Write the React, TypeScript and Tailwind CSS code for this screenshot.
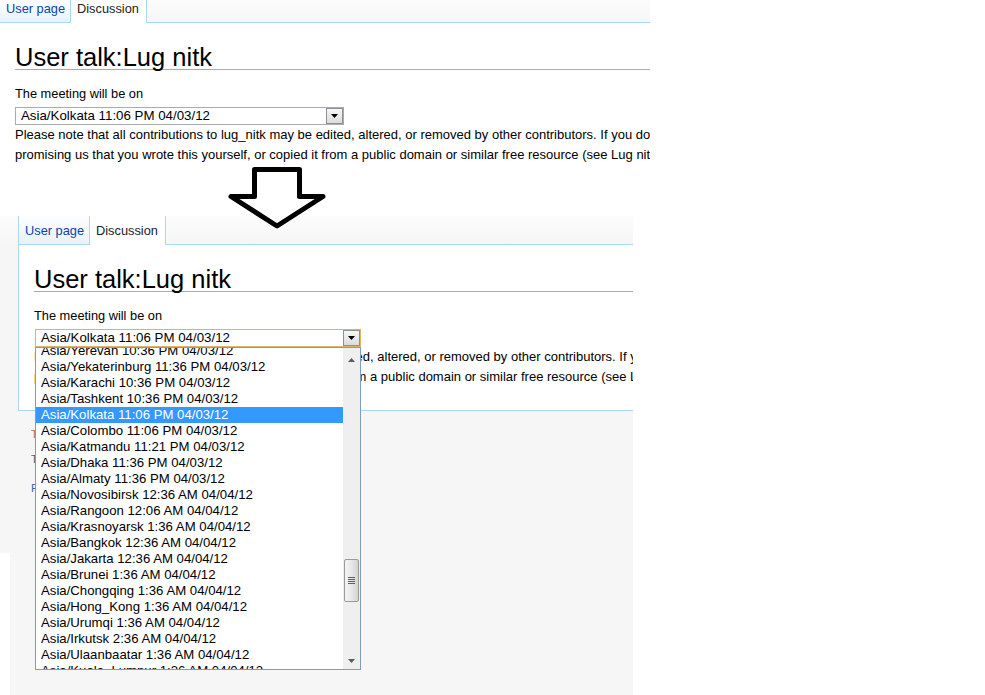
import React from 'react'

const font = "font-['Liberation_Sans',Arial,sans-serif]"

const zones: string[] = [
  'Asia/Yerevan 10:36 PM 04/03/12',
  'Asia/Yekaterinburg 11:36 PM 04/03/12',
  'Asia/Karachi 10:36 PM 04/03/12',
  'Asia/Tashkent 10:36 PM 04/03/12',
  'Asia/Kolkata 11:06 PM 04/03/12',
  'Asia/Colombo 11:06 PM 04/03/12',
  'Asia/Katmandu 11:21 PM 04/03/12',
  'Asia/Dhaka 11:36 PM 04/03/12',
  'Asia/Almaty 11:36 PM 04/03/12',
  'Asia/Novosibirsk 12:36 AM 04/04/12',
  'Asia/Rangoon 12:06 AM 04/04/12',
  'Asia/Krasnoyarsk 1:36 AM 04/04/12',
  'Asia/Bangkok 12:36 AM 04/04/12',
  'Asia/Jakarta 12:36 AM 04/04/12',
  'Asia/Brunei 1:36 AM 04/04/12',
  'Asia/Chongqing 1:36 AM 04/04/12',
  'Asia/Hong_Kong 1:36 AM 04/04/12',
  'Asia/Urumqi 1:36 AM 04/04/12',
  'Asia/Irkutsk 2:36 AM 04/04/12',
  'Asia/Ulaanbaatar 1:36 AM 04/04/12',
  'Asia/Kuala_Lumpur 1:36 AM 04/04/12',
]

const Tabs = ({ lower }: { lower?: boolean }) => (
  <div className={`flex ${lower ? 'h-[29px]' : 'h-[23px]'} text-[12.8px] leading-[19.2px]`}>
    <div
      className={`flex items-end pl-[6px] pb-[4px] border-b border-r border-[#a7d7f9] bg-gradient-to-b from-[#fdfeff] to-[#e9f2f9] text-[#0645ad] ${
        lower ? 'w-[72px] border-l' : 'w-[71px]'
      }`}
    >
      User page
    </div>
    <div className="flex items-end pl-[6px] pb-[5px] w-[76px] border-r border-[#a7d7f9] bg-white text-[#222]">
      Discussion
    </div>
    <div className="flex-1 border-b border-[#a7d7f9] bg-gradient-to-b from-[#fcfcfc] to-[#f6f6f6]" />
  </div>
)

const Tri = ({ up, color }: { up?: boolean; color: string }) => (
  <svg width="7" height="4" viewBox="0 0 7 4">
    <path d={up ? 'M0 4h7L3.5 0z' : 'M0 0h7L3.5 4z'} fill={color} />
  </svg>
)

const DropList = () => (
  <div className="absolute left-[-1px] top-[17px] z-10 w-[326px] h-[323px] border border-[#7f9db9] bg-white flex overflow-hidden">
    <div className="flex-1 min-w-0 overflow-hidden">
      <div className="mt-[-5px]">
        {zones.map((z) => (
          <div
            key={z}
            className={`h-[16px] leading-[16px] pl-[5px] text-[13.2px] whitespace-nowrap ${
              z.startsWith('Asia/Kolkata') ? 'bg-[#3399ff] text-white' : 'text-black'
            }`}
          >
            {z}
          </div>
        ))}
      </div>
    </div>
    <div className="w-[17px] bg-[#efefef] flex flex-col">
      <div className="h-[17px] flex items-end justify-center pb-[3px]">
        <Tri up color="#5b5b5b" />
      </div>
      <div className="h-[194px]" />
      <div className="mx-[1px] h-[43px] rounded-[2px] border border-[#9a9a9a] bg-gradient-to-r from-[#f4f4f4] via-[#e8e8e8] to-[#d3d3d3] flex flex-col items-center justify-center gap-[1px]">
        <div className="h-px w-[7px] bg-[#5e5e5e]" />
        <div className="h-px w-[7px] bg-[#5e5e5e]" />
        <div className="h-px w-[7px] bg-[#5e5e5e]" />
        <div className="h-px w-[7px] bg-[#5e5e5e]" />
      </div>
      <div className="flex-1" />
      <div className="h-[17px] flex items-center justify-center">
        <Tri color="#5b5b5b" />
      </div>
    </div>
  </div>
)

const Select = ({ focused, w }: { focused?: boolean; w: string }) => (
  <div
    className={`relative ${w} h-[18px] border bg-white flex items-center ${
      focused ? 'border-[#dbb46a]' : 'border-[#a5acb5]'
    }`}
  >
    <span className="flex-1 pl-[5px] text-[13.3px] leading-[16px] text-black whitespace-nowrap">
      Asia/Kolkata 11:06 PM 04/03/12
    </span>
    <div className="h-full w-[17px] border border-[#8e8f8f] bg-gradient-to-b from-[#f7f7f7] to-[#dcdcdc] flex items-center justify-center">
      <Tri color="#000" />
    </div>
    {focused && <DropList />}
  </div>
)

const Content = ({ focused }: { focused?: boolean }) => (
  <div className="pl-[15px] pt-[23px] text-black">
    <h1 className="text-[25.5px] leading-[23px] font-normal border-b border-[#aaaaaa] whitespace-nowrap">
      User talk:Lug nitk
    </h1>
    <div className="mt-[14px] text-[12.8px] leading-[19.2px]">The meeting will be on</div>
    <div className={`mt-[4px] ${focused ? 'ml-[1px]' : ''}`}>
      <Select focused={focused} w={focused ? 'w-[326px]' : 'w-[329px]'} />
    </div>
    <div className="overflow-hidden whitespace-nowrap text-[13px] leading-[20px]">
      <div>
        Please note that all contributions to lug_nitk may be edited, altered, or removed by other
        contributors. If you do not want your writing to be edited mercilessly, then do not submit it here.
        You are also
      </div>
      <div>
        promising us that you wrote this yourself, or copied it from a public domain or similar free resource
        (see Lug nitk:Copyrights for details). Do not submit copyrighted work without permission!
      </div>
    </div>
  </div>
)

export default function App() {
  return (
    <div className={`relative w-[985px] h-[695px] bg-white overflow-hidden ${font}`}>
      {/* before */}
      <div className="w-[650px] h-[170px] overflow-hidden bg-white">
        <Tabs />
        <Content />
      </div>

      {/* after */}
      <div className="mt-[46px] w-[633px] flex flex-col">
        <div className="flex">
          <div className="w-[18px] flex flex-col bg-[#f6f6f6]">
            <div className="h-[29px] bg-gradient-to-b from-[#fcfcfc] to-[#f6f6f6]" />
          </div>
          <div className="flex-1 min-w-0">
            <Tabs lower />
            <div className="h-[166px] border-l border-b border-[#a7d7f9] bg-white">
              <Content focused />
            </div>
          </div>
        </div>
        <div className="h-[142px] bg-[#f6f6f6] pl-[31px] pt-[15px] text-[11.2px] leading-[16px]">
          <div className="w-[320px] overflow-hidden whitespace-nowrap">
            <div className="text-[#b0703a]">This page was last modified on 3 April 2012, at 17:36.</div>
            <div className="mt-[9px] text-[#6b5b48]">
              Text is available under the Creative Commons Attribution-ShareAlike License
            </div>
            <div className="mt-[13px] text-[#3366bb]">Privacy policy</div>
          </div>
        </div>
        <div className="h-[142px] ml-[10px] bg-[#f6f6f6]" />
      </div>

      {/* arrow */}
      <svg
        className="absolute left-[226px] top-[165px]"
        width="104"
        height="68"
        viewBox="0 0 104 68"
      >
        <path
          d="M28.5 4.5H73.5V31.5H97L51 61L5 31.5H28.5Z"
          fill="#fff"
          stroke="#000"
          strokeWidth="5"
          strokeLinejoin="round"
        />
      </svg>
    </div>
  )
}
